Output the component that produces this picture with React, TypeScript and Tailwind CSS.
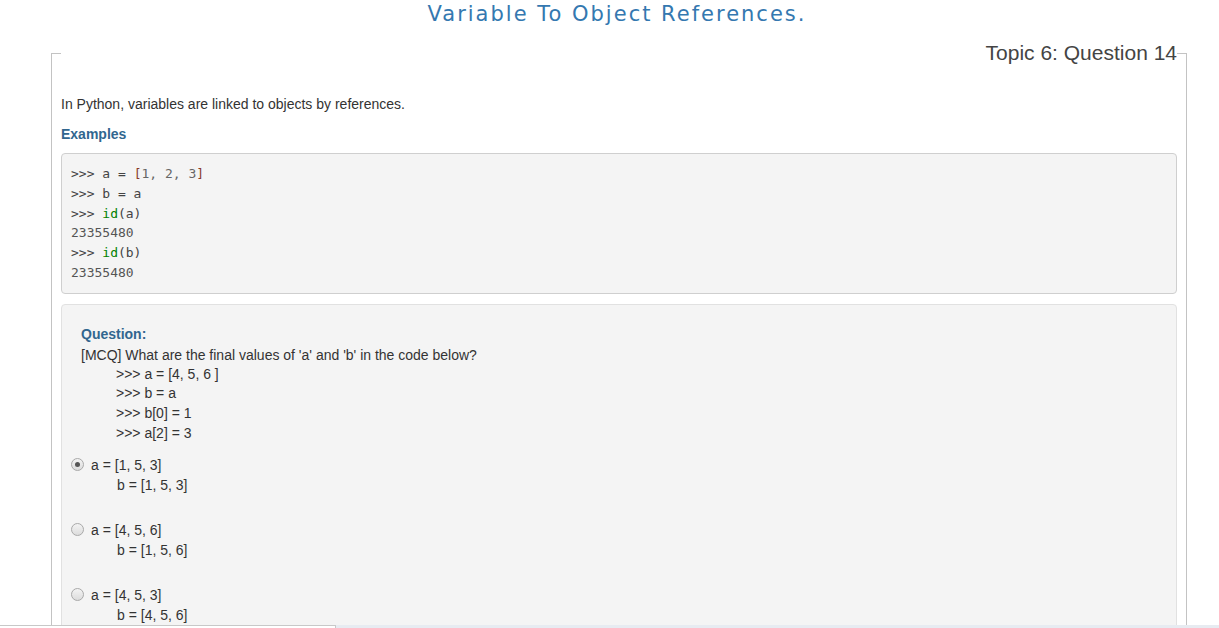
import React from "react";

const Radio = ({ checked }: { checked?: boolean }) => (
  <span className="mt-[3px] flex h-[13px] w-[13px] shrink-0 items-center justify-center rounded-full border border-[#a9a9a9] bg-gradient-to-b from-[#f3f3f3] to-[#dcdcdc]">
    {checked && <span className="h-[5px] w-[5px] rounded-full bg-[#555]" />}
  </span>
);

const Option = ({ a, b, checked }: { a: string; b: string; checked?: boolean }) => (
  <div className="flex gap-[7px] pl-[9px]">
    <Radio checked={checked} />
    <div className="leading-[20px]">
      <div>{a}</div>
      <div className="pl-[26px]">{b}</div>
    </div>
  </div>
);

export default function App() {
  const sans = { fontFamily: '"Liberation Sans", Arial, sans-serif' };
  return (
    <div className="relative h-[628px] overflow-hidden bg-white text-[#333]" style={sans}>
      <h1
        className="pl-[15px] pt-[1px] text-center text-[21px] leading-[26px] tracking-[2px] text-[#3478b0]"
        style={{ fontFamily: '"DejaVu Sans", Verdana, sans-serif' }}
      >
        Variable To Object References.
      </h1>
      <div className="ml-[51px] mt-[14px] w-[1136px]">
        <fieldset className="border border-[#c3c3c3] px-[9px] pb-[40px]">
          <legend className="w-full text-right text-[21px] leading-[24px] text-[#444]">
            Topic 6: Question 14
          </legend>
          <p className="mt-[29px] text-[14px] leading-[20px]">
            In Python, variables are linked to objects by references.
          </p>
          <p className="mt-[10px] text-[14px] font-bold leading-[20px] text-[#31668f]">Examples</p>
          <pre
            className="mt-[9px] rounded-[4px] border border-[#cfcfcf] bg-[#f4f4f4] px-[9px] py-[10px] text-[13px] leading-[19.8px] text-[#444]"
            style={{ fontFamily: '"DejaVu Sans Mono", "Liberation Mono", monospace' }}
          >
            <div>
              {">>> a = "}
              <span className="text-[#8a3b2b]">[</span>
              <span className="text-[#666]">1, 2, 3</span>
              <span className="text-[#8a3b2b]">]</span>
            </div>
            <div>{">>> b = a"}</div>
            <div>
              {">>> "}
              <span className="text-[#008000]">id</span>(a)
            </div>
            <div className="text-[#555]">23355480</div>
            <div>
              {">>> "}
              <span className="text-[#008000]">id</span>(b)
            </div>
            <div className="text-[#555]">23355480</div>
          </pre>
          <div className="mt-[10px] rounded-[4px] border border-[#e1e1e1] bg-[#f4f4f4] pb-[20px] pt-[19px] text-[14px]">
            <div className="px-[19px] leading-[20px]">
              <div className="font-bold leading-[21px] text-[#31668f]">Question:</div>
              <div>[MCQ] What are the final values of 'a' and 'b' in the code below?</div>
              <div className="pl-[35px] leading-[19.7px]">
                <div>{">>> a = [4, 5, 6 ]"}</div>
                <div>{">>> b = a"}</div>
                <div>{">>> b[0] = 1"}</div>
                <div>{">>> a[2] = 3"}</div>
              </div>
            </div>
            <div className="mt-[11px] flex flex-col gap-[25px]">
              <Option a="a = [1, 5, 3]" b="b = [1, 5, 3]" checked />
              <Option a="a = [4, 5, 6]" b="b = [1, 5, 6]" />
              <Option a="a = [4, 5, 3]" b="b = [4, 5, 6]" />
            </div>
          </div>
        </fieldset>
      </div>
      <div className="absolute bottom-0 left-0 flex h-[3px] w-full">
        <div className="w-[336px] border-r border-t border-[#c8c8c8] bg-white" />
        <div className="flex-1 bg-[#e7ebf1]" />
      </div>
    </div>
  );
}
